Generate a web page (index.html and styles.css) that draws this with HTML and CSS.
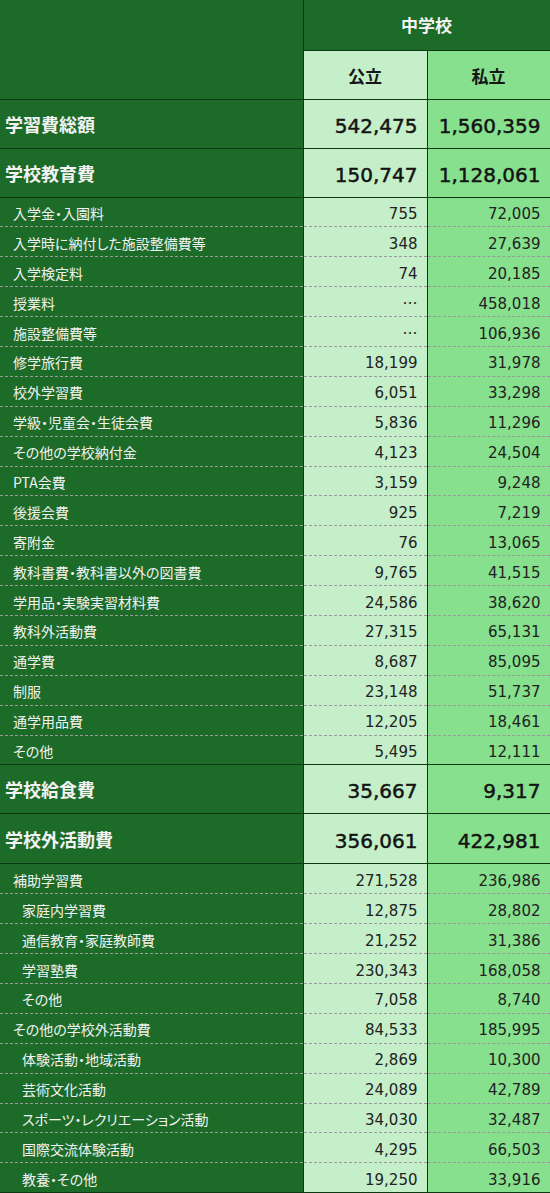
FILE: index.html
```html
<!DOCTYPE html>
<html lang="ja">
<head>
<meta charset="utf-8">
<title>学習費</title>
<link rel="stylesheet" href="styles.css">
</head>
<body>
<table class="cost">
  <colgroup>
    <col class="c-label">
    <col class="c-pub">
    <col class="c-pri">
  </colgroup>
  <thead>
    <tr class="h1">
      <th class="corner" rowspan="2"></th>
      <th class="school" colspan="2">中学校</th>
    </tr>
    <tr class="h2">
      <th class="pub">公立</th>
      <th class="pri">私立</th>
    </tr>
  </thead>
  <tbody>
    <tr class="big"><th>学習費総額</th><td class="pub">542,475</td><td class="pri">1,560,359</td></tr>
    <tr class="big"><th>学校教育費</th><td class="pub">150,747</td><td class="pri">1,128,061</td></tr>
    <tr class="sm"><th>入学金・入園料</th><td class="pub">755</td><td class="pri">72,005</td></tr>
    <tr class="sm"><th>入学時に納付した施設整備費等</th><td class="pub">348</td><td class="pri">27,639</td></tr>
    <tr class="sm"><th>入学検定料</th><td class="pub">74</td><td class="pri">20,185</td></tr>
    <tr class="sm"><th>授業料</th><td class="pub na">…</td><td class="pri">458,018</td></tr>
    <tr class="sm"><th>施設整備費等</th><td class="pub na">…</td><td class="pri">106,936</td></tr>
    <tr class="sm"><th>修学旅行費</th><td class="pub">18,199</td><td class="pri">31,978</td></tr>
    <tr class="sm"><th>校外学習費</th><td class="pub">6,051</td><td class="pri">33,298</td></tr>
    <tr class="sm"><th>学級・児童会・生徒会費</th><td class="pub">5,836</td><td class="pri">11,296</td></tr>
    <tr class="sm"><th>その他の学校納付金</th><td class="pub">4,123</td><td class="pri">24,504</td></tr>
    <tr class="sm"><th>PTA会費</th><td class="pub">3,159</td><td class="pri">9,248</td></tr>
    <tr class="sm"><th>後援会費</th><td class="pub">925</td><td class="pri">7,219</td></tr>
    <tr class="sm"><th>寄附金</th><td class="pub">76</td><td class="pri">13,065</td></tr>
    <tr class="sm"><th>教科書費・教科書以外の図書費</th><td class="pub">9,765</td><td class="pri">41,515</td></tr>
    <tr class="sm"><th>学用品・実験実習材料費</th><td class="pub">24,586</td><td class="pri">38,620</td></tr>
    <tr class="sm"><th>教科外活動費</th><td class="pub">27,315</td><td class="pri">65,131</td></tr>
    <tr class="sm"><th>通学費</th><td class="pub">8,687</td><td class="pri">85,095</td></tr>
    <tr class="sm"><th>制服</th><td class="pub">23,148</td><td class="pri">51,737</td></tr>
    <tr class="sm"><th>通学用品費</th><td class="pub">12,205</td><td class="pri">18,461</td></tr>
    <tr class="sm last"><th>その他</th><td class="pub">5,495</td><td class="pri">12,111</td></tr>
    <tr class="big"><th>学校給食費</th><td class="pub">35,667</td><td class="pri">9,317</td></tr>
    <tr class="big big2"><th>学校外活動費</th><td class="pub">356,061</td><td class="pri">422,981</td></tr>
    <tr class="sm"><th>補助学習費</th><td class="pub">271,528</td><td class="pri">236,986</td></tr>
    <tr class="sm"><th class="ind">家庭内学習費</th><td class="pub">12,875</td><td class="pri">28,802</td></tr>
    <tr class="sm"><th class="ind">通信教育・家庭教師費</th><td class="pub">21,252</td><td class="pri">31,386</td></tr>
    <tr class="sm"><th class="ind">学習塾費</th><td class="pub">230,343</td><td class="pri">168,058</td></tr>
    <tr class="sm"><th class="ind">その他</th><td class="pub">7,058</td><td class="pri">8,740</td></tr>
    <tr class="sm"><th>その他の学校外活動費</th><td class="pub">84,533</td><td class="pri">185,995</td></tr>
    <tr class="sm"><th class="ind">体験活動・地域活動</th><td class="pub">2,869</td><td class="pri">10,300</td></tr>
    <tr class="sm"><th class="ind">芸術文化活動</th><td class="pub">24,089</td><td class="pri">42,789</td></tr>
    <tr class="sm"><th class="ind">スポーツ・レクリエーション活動</th><td class="pub">34,030</td><td class="pri">32,487</td></tr>
    <tr class="sm"><th class="ind">国際交流体験活動</th><td class="pub">4,295</td><td class="pri">66,503</td></tr>
    <tr class="sm end"><th class="ind">教養・その他</th><td class="pub">19,250</td><td class="pri">33,916</td></tr>
  </tbody>
</table>
</body>
</html>
```
FILE: styles.css
```css
html, body {
  margin: 0;
  padding: 0;
  background: #ffffff;
}

.cost {
  width: 550px;
  border-collapse: collapse;
  table-layout: fixed;
  font-family: "DejaVu Sans", "Noto Sans CJK JP", sans-serif;
  font-feature-settings: "palt";
  color: #1a1a1a;
}

.c-label { width: 303px; }
.c-pub { width: 124px; }
.c-pri { width: 123px; }

.cost th,
.cost td {
  padding: 0;
  border: 1px solid #0c3812;
  vertical-align: middle;
  line-height: 1;
}

.cost tr > :first-child {
  border-left: none;
}

.cost thead .h1 > * {
  border-top: none;
}

.cost tbody th {
  background: #1c6b28;
  color: #f2f2f2;
  text-align: left;
  font-family: "Noto Sans CJK JP", sans-serif;
}

.corner,
.school {
  background: #1c6b28;
}

.school {
  color: #f4f4f4;
  font-family: "Noto Sans CJK JP", sans-serif;
  font-size: 17px;
  font-weight: 700;
  text-align: center;
}

.h1 { height: 50px; }
.h2 { height: 49px; }

.h2 th {
  font-family: "Noto Sans CJK JP", sans-serif;
  font-size: 17px;
  font-weight: 700;
  text-align: center;
  color: #161616;
  padding-top: 2px;
}

.pub { background: #c5efc9; }
.pri { background: #86e08e; }

.cost td {
  text-align: right;
  padding-right: 9px;
}

.big { height: 49px; }
.big2 { height: 50px; }

.big th {
  font-size: 18px;
  font-weight: 700;
  padding-left: 5px;
  color: #ffffff;
}

.big td {
  font-size: 20px;
  font-weight: 400;
  -webkit-text-stroke: 0.5px currentColor;
  color: #141414;
  padding-top: 4px;
}

.sm { height: 29.9px; }

.sm th,
.sm td {
  border-bottom: 1px dashed #9a9a9a;
  border-top: 1px dashed #9a9a9a;
}

.sm th {
  font-size: 14px;
  font-weight: 400;
  padding-left: 13px;
  padding-top: 2px;
}

.sm th.ind {
  padding-left: 22px;
}

.sm td {
  font-size: 15px;
  font-weight: 400;
  color: #222;
  padding-top: 5px;
}

.sm td.na {
  font-family: "Noto Sans CJK JP", sans-serif;
  font-size: 15px;
  color: #2a2a2a;
  padding-top: 2px;
}

.sm.last th,
.sm.last td,
.sm.end th,
.sm.end td {
  border-bottom: 1px solid #0c3812;
}
```
